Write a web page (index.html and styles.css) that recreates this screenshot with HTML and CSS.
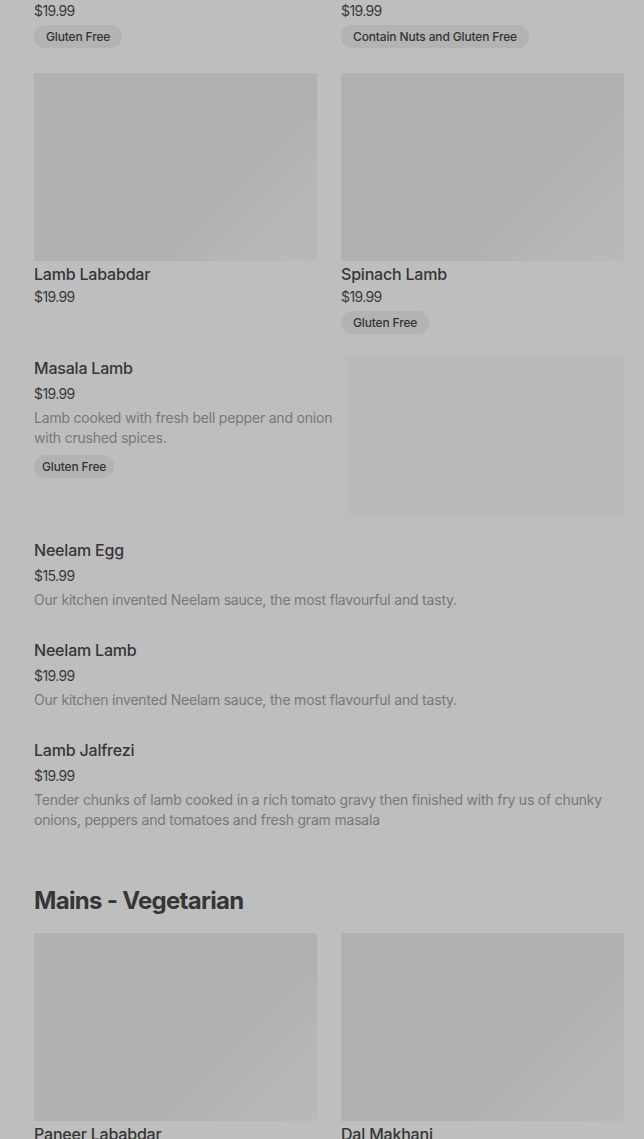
FILE: index.html
```html
<!DOCTYPE html>
<html>
<head>
<meta charset="utf-8">
<link rel="stylesheet" href="styles.css">
</head>
<body>
<main class="menu">
  <div class="grid">
    <div class="card">
      <div class="thumb"></div>
      <div class="name">Lamb Korma</div>
      <div class="price">$19.99</div>
      <div class="tags"><span class="tag">Gluten Free</span></div>
    </div>
    <div class="card">
      <div class="thumb"></div>
      <div class="name">Lamb Pasanda</div>
      <div class="price">$19.99</div>
      <div class="tags"><span class="tag">Contain Nuts and Gluten Free</span></div>
    </div>
    <div class="card">
      <div class="thumb"></div>
      <div class="name">Lamb Lababdar</div>
      <div class="price">$19.99</div>
    </div>
    <div class="card">
      <div class="thumb"></div>
      <div class="name">Spinach Lamb</div>
      <div class="price">$19.99</div>
      <div class="tags"><span class="tag">Gluten Free</span></div>
    </div>
  </div>

  <div class="item with-image">
    <div class="item-text">
      <div class="name">Masala Lamb</div>
      <div class="price list">$19.99</div>
      <div class="desc">Lamb cooked with fresh bell pepper and onion with crushed spices.</div>
      <div class="tags"><span class="tag small">Gluten Free</span></div>
    </div>
    <div class="side-thumb"></div>
  </div>

  <div class="item">
    <div class="name">Neelam Egg</div>
    <div class="price list">$15.99</div>
    <div class="desc">Our kitchen invented Neelam sauce, the most flavourful and tasty.</div>
  </div>

  <div class="item">
    <div class="name">Neelam Lamb</div>
    <div class="price list">$19.99</div>
    <div class="desc">Our kitchen invented Neelam sauce, the most flavourful and tasty.</div>
  </div>

  <div class="item">
    <div class="name">Lamb Jalfrezi</div>
    <div class="price list">$19.99</div>
    <div class="desc">Tender chunks of lamb cooked in a rich tomato gravy then finished with fry us of chunky onions, peppers and tomatoes and fresh gram masala</div>
  </div>

  <h2 class="section-title">Mains - Vegetarian</h2>

  <div class="grid">
    <div class="card">
      <div class="thumb"></div>
      <div class="name">Paneer Lababdar</div>
      <div class="price">$17.99</div>
    </div>
    <div class="card">
      <div class="thumb"></div>
      <div class="name">Dal Makhani</div>
      <div class="price">$15.99</div>
    </div>
  </div>
</main>
</body>
</html>
```
FILE: styles.css
```css
html, body {
  margin: 0;
  padding: 0;
  background: #bebebe;
  overflow: hidden;
}
body {
  font-family: Inter, "Liberation Sans", sans-serif;
  color: #383838;
}
.menu {
  margin-top: -213px;
  padding: 0 20px 0 34px;
}
.grid {
  display: grid;
  grid-template-columns: 1fr 1fr;
  column-gap: 24px;
  row-gap: 25px;
  align-items: start;
}
.thumb {
  height: 188px;
  background: linear-gradient(135deg, #b1b1b1 0%, #b1b1b1 68%, #b6b6b6 80%, #b9b9b9 100%);
  border-radius: 1px;
}
.name {
  font-size: 16px;
  line-height: 24px;
  font-weight: 500;
  color: #363636;
  letter-spacing: -0.2px;
}
.card .name {
  margin-top: 1px;
}
.price {
  font-size: 14px;
  line-height: 20px;
  color: #3a3a3a;
  letter-spacing: -0.6px;
}
.card .price {
  margin-top: 1px;
}
.price.list {
  margin-top: 4px;
}
.desc {
  margin-top: 4px;
  font-size: 14px;
  line-height: 20px;
  color: #787878;
  letter-spacing: -0.2px;
}
.tags {
  margin-top: 4px;
  display: flex;
}
.tag {
  display: inline-block;
  height: 23px;
  line-height: 23px;
  padding: 0 12px;
  border-radius: 12px;
  background: #b3b3b3;
  font-size: 12px;
  font-weight: 500;
  color: #333;
  letter-spacing: -0.15px;
}
.tag.small {
  padding: 0 8px;
}
.item-text .tags {
  margin-top: 7px;
}
.item {
  padding: 0;
  margin-top: 28px;
}
.item.with-image {
  margin-top: 22px;
  display: flex;
  gap: 10px;
  align-items: flex-start;
}
.item-text {
  flex: 1;
  min-width: 0;
}
.side-thumb {
  width: 277px;
  height: 160px;
  margin-top: 1px;
  background: #bababa;
  box-shadow: 0 0 4px 2px #bcbcbc;
}
.item.with-image + .item {
  margin-top: 21px;
}
.section-title {
  margin: 55px 0 16px;
  font-size: 24px;
  line-height: 32px;
  font-weight: 700;
  color: #363636;
  letter-spacing: -0.7px;
}
```
